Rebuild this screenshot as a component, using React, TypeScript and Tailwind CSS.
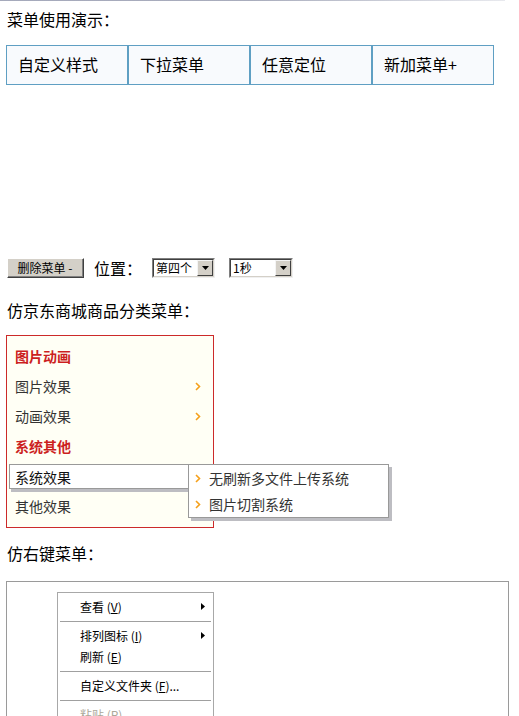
import React from "react";

const Chevron = () => (
  <svg width="6" height="9" viewBox="0 0 6 9" className="shrink-0">
    <polyline points="1,1 4.5,4.5 1,8" fill="none" stroke="#f5a01a" strokeWidth="1.6" />
  </svg>
);

const Arrow = () => (
  <svg width="4" height="7" viewBox="0 0 4 7" className="shrink-0">
    <polygon points="0,0 4,3.5 0,7" fill="#000" />
  </svg>
);

const DownTri = () => (
  <svg width="7" height="4" viewBox="0 0 7 4">
    <polygon points="0,0 7,0 3.5,4" fill="#000" />
  </svg>
);

function Select({ label, w }: { label: string; w: string }) {
  return (
    <div className={`${w} h-[20px] flex border border-t-[#7f7f7f] border-l-[#7f7f7f] border-b-[#f0f0f0] border-r-[#f0f0f0]`}>
      <div className="flex-1 flex border border-t-[#404040] border-l-[#404040] border-b-[#d4d0c8] border-r-[#d4d0c8] bg-white">
        <div className="flex-1 flex items-center pl-[2px] text-[12px] leading-none text-black">{label}</div>
        <div className="w-[16px] flex items-center justify-center bg-[#d4d0c8] border border-t-[#f4f4f4] border-l-[#f4f4f4] border-b-[#404040] border-r-[#404040]">
          <DownTri />
        </div>
      </div>
    </div>
  );
}

function CatRow({ text, head, arrow }: { text: string; head?: boolean; arrow?: boolean }) {
  return (
    <div className="h-[30px] flex items-center justify-between pl-[8px] pr-[12px]">
      <span className={head ? "text-[14px] leading-none font-bold text-[#cc1f1f]" : "text-[14px] leading-none text-[#333]"}>{text}</span>
      {arrow && <Chevron />}
    </div>
  );
}

function MenuItem({ children, arrow, disabled }: { children: React.ReactNode; arrow?: boolean; disabled?: boolean }) {
  return (
    <div className={`h-[21px] flex items-center justify-between pl-[22px] pr-[8px] text-[12px] leading-none ${disabled ? "text-[#aca899]" : "text-black"}`}>
      <span>{children}</span>
      {arrow && <Arrow />}
    </div>
  );
}

const Sep = () => (
  <div className="h-[8px] flex items-center px-[2px]">
    <div className="h-[1px] w-full bg-[#a0a0a0]" />
  </div>
);

export default function App() {
  return (
    <div
      className="w-[519px] min-h-[716px] bg-white text-black flex flex-col"
      style={{ fontFamily: '"Noto Sans CJK SC", "Noto Sans", sans-serif' }}
    >
      <div className="h-[1px] w-[505px] bg-gradient-to-r from-[#a5a9bb] via-[#a9adbd] to-[#e8e9ee]" />

      <div className="mt-[6px] h-[24px] pl-[7px] flex items-center text-[16px] leading-none">菜单使用演示：</div>

      <div className="mt-[14px] ml-[6px] flex">
        {["自定义样式", "下拉菜单", "任意定位", "新加菜单+"].map((t) => (
          <div key={t} className="w-[122px] h-[40px] border border-[#5f9fc3] bg-[#f8fafd] flex items-center pl-[11px] pb-[2px] text-[16px] leading-none">
            {t}
          </div>
        ))}
      </div>

      <div className="mt-[173px] h-[20px] flex items-center">
        <div className="ml-[7px] w-[77px] h-[20px] border border-t-white border-l-white border-b-[#404040] border-r-[#404040] bg-[#d4d0c8]">
          <div className="w-full h-full flex items-center justify-center border-b border-r border-b-[#808080] border-r-[#808080] text-[12px] leading-none">
            删除菜单 -
          </div>
        </div>
        <span className="ml-[10px] text-[16px] leading-none">位置：</span>
        <div className="ml-[10px]">
          <Select label="第四个" w="w-[63px]" />
        </div>
        <div className="ml-[14px]">
          <Select label="1秒" w="w-[64px]" />
        </div>
      </div>

      <div className="mt-[20px] h-[24px] pl-[7px] flex items-center text-[16px] leading-none">仿京东商城商品分类菜单：</div>

      <div className="mt-[13px] ml-[6px] w-[208px] border border-[#cc2a2a] bg-[#fffff5] pt-[5px] pb-[6px] flex flex-col">
        <CatRow text="图片动画" head />
        <CatRow text="图片效果" arrow />
        <CatRow text="动画效果" arrow />
        <CatRow text="系统其他" head />
        <div className="h-[30px] relative pt-[3px] pl-[2px]">
          <div className="relative z-10 w-[200px] h-[25px] bg-white border border-[#999] shadow-[2px_3px_0_#bdbdc2] flex items-center justify-between pl-[5px] pr-[10px]">
            <span className="text-[14px] leading-none text-[#111]">系统效果</span>
            <Chevron />
          </div>
          <div className="absolute z-20 top-[3px] left-[181px] w-[201px] h-[54px] bg-white border border-[#999] shadow-[3px_3px_0_#bdbdc2] flex flex-col">
            <div className="h-[26px] flex items-center pl-[6px] gap-[8px]">
              <Chevron />
              <span className="text-[14px] leading-none text-[#333]">无刷新多文件上传系统</span>
            </div>
            <div className="h-[26px] flex items-center pl-[6px] gap-[8px]">
              <Chevron />
              <span className="text-[14px] leading-none text-[#333]">图片切割系统</span>
            </div>
          </div>
        </div>
        <CatRow text="其他效果" />
      </div>

      <div className="mt-[13px] h-[24px] pl-[7px] flex items-center text-[16px] leading-none">仿右键菜单：</div>

      <div className="mt-[16px] ml-[6px] w-[503px] h-[200px] border border-[#9a9a9a] pl-[50px] pt-[10px]">
        <div className="w-[157px] bg-white border border-[#a8a8a8] py-[3px]">
          <MenuItem arrow>
            查看 (<u>V</u>)
          </MenuItem>
          <Sep />
          <MenuItem arrow>
            排列图标 (<u>I</u>)
          </MenuItem>
          <MenuItem>
            刷新 (<u>E</u>)
          </MenuItem>
          <Sep />
          <MenuItem>
            自定义文件夹 (<u>F</u>)...
          </MenuItem>
          <Sep />
          <MenuItem disabled>
            粘贴 (<u>P</u>)
          </MenuItem>
          <MenuItem disabled>
            粘贴快捷方式 (<u>S</u>)
          </MenuItem>
        </div>
      </div>
    </div>
  );
}
